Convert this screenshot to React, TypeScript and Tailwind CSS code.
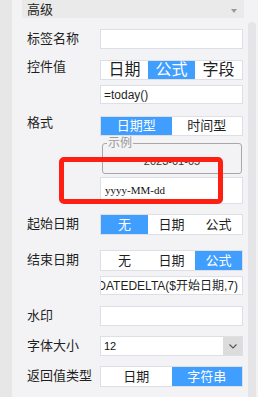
import clsx from "clsx";

type SegProps = {
  items: string[];
  active: number;
  className?: string;
};

const Seg = ({ items, active, className }: SegProps) => (
  <div className={clsx("flex border border-[#dcdfe6] bg-white", className)}>
    {items.map((t, i) => (
      <div
        key={t}
        className={clsx(
          "flex flex-1 items-center justify-center",
          i === active ? "bg-[#409eff] text-white" : "text-[#1f1f1f]"
        )}
      >
        {t}
      </div>
    ))}
  </div>
);

const Label = ({ children, tight }: { children: string; tight?: boolean }) => (
  <div
    className={clsx(
      "w-[78px] shrink-0 pl-[5px] text-[13px] text-[#1f1f1f]",
      tight ? "leading-[14px]" : "leading-[20px]"
    )}
  >
    {children}
  </div>
);

const Input = ({ className, children }: { className?: string; children?: React.ReactNode }) => (
  <div
    className={clsx(
      "flex items-center overflow-hidden border border-[#dcdfe6] bg-white text-[12px] text-[#1f1f1f]",
      className
    )}
  >
    {children}
  </div>
);

export default function App() {
  return (
    <div className="relative flex h-[397px] w-[258px] overflow-hidden bg-[#f3f3f5] font-['Liberation_Sans','Noto_Sans_CJK_SC',sans-serif]">
      <div className="w-[12px] shrink-0 bg-[#e7e7e7]" />

      <div className="ml-[10px] flex w-[222px] flex-col">
        {/* header */}
        <div className="flex h-[18px] items-center justify-between bg-[#eaeaea] pl-[5px] pr-[7px]">
          <span className="text-[13px] leading-none text-[#1f1f1f]">高级</span>
          <span className="mt-[4px] h-0 w-0 border-x-[3.5px] border-t-[4px] border-x-transparent border-t-[#9a9a9a]" />
        </div>

        {/* 标签名称 */}
        <div className="mt-[11px] flex">
          <Label>标签名称</Label>
          <Input className="h-[20px] w-[143px]" />
        </div>

        {/* 控件值 */}
        <div className="mt-[11px] flex">
          <Label tight>控件值</Label>
          <div className="flex w-[143px] flex-col">
            <Seg items={["日期", "公式", "字段"]} active={1} className="h-[20px] text-[16px]" />
            <Input className="mt-[5px] h-[19px] pl-[3px]">=today()</Input>
          </div>
        </div>

        {/* 格式 */}
        <div className="mt-[12px] flex">
          <Label tight>格式</Label>
          <div className="flex w-[143px] flex-col">
            <Seg items={["日期型", "时间型"]} active={0} className="h-[20px] text-[13px]" />
            <fieldset className="mx-[1px] ml-[2px] mt-[1px] h-[37px] rounded-[3px] border border-[#a8a8a8] px-[4px]">
              <legend className="px-[1px] text-[12px] leading-[12px] text-[#9a9a9a]">示例</legend>
              <div className="pt-[6px] text-center text-[11px] leading-[12px] text-[#333]">2023-01-05</div>
            </fieldset>
            <Input className="mt-[3px] h-[27px] pl-[4px]">
              <span className="font-['Liberation_Serif',serif] text-[11px] text-[#111]">yyyy-MM-dd</span>
            </Input>
          </div>
        </div>

        {/* 起始日期 */}
        <div className="mt-[10px] flex">
          <Label>起始日期</Label>
          <Seg items={["无", "日期", "公式"]} active={0} className="h-[21px] w-[143px] text-[13px]" />
        </div>

        {/* 结束日期 */}
        <div className="mt-[15px] flex">
          <Label>结束日期</Label>
          <div className="flex w-[143px] flex-col">
            <Seg items={["无", "日期", "公式"]} active={2} className="h-[21px] text-[13px]" />
            <Input className="mt-[5px] h-[19px] justify-end pr-[4px]">
              <span className="whitespace-nowrap">DATEDELTA($开始日期,7)</span>
            </Input>
          </div>
        </div>

        {/* 水印 */}
        <div className="mt-[11px] flex">
          <Label>水印</Label>
          <Input className="h-[20px] w-[143px]" />
        </div>

        {/* 字体大小 */}
        <div className="mt-[10px] flex">
          <Label>字体大小</Label>
          <div className="flex h-[20px] w-[143px] border border-[#dcdfe6] bg-white">
            <div className="flex flex-1 items-center pl-[3px] text-[11px] text-[#111]">12</div>
            <div className="flex w-[19px] items-center justify-center bg-[#dcdcdc]">
              <svg width="8" height="5" viewBox="0 0 8 5" fill="none">
                <path d="M0.5 0.5 L4 4 L7.5 0.5" stroke="#555" strokeWidth="1.1" />
              </svg>
            </div>
          </div>
        </div>

        {/* 返回值类型 */}
        <div className="mt-[10px] flex">
          <Label>返回值类型</Label>
          <Seg items={["日期", "字符串"]} active={1} className="h-[21px] w-[143px] text-[13px]" />
        </div>
      </div>

      {/* scrollbar */}
      <div className="w-[14px] shrink-0 pl-[4px] pr-[2px] pt-[22px]">
        <div className="h-full w-[8px] rounded-t-[4px] bg-[#e5e5e7]" />
      </div>

      {/* red annotation box */}
      <div className="absolute left-[59px] top-[157px] h-[47px] w-[164px] rounded-[5px] border-[5px] border-[#ff1e12]" />
    </div>
  );
}
